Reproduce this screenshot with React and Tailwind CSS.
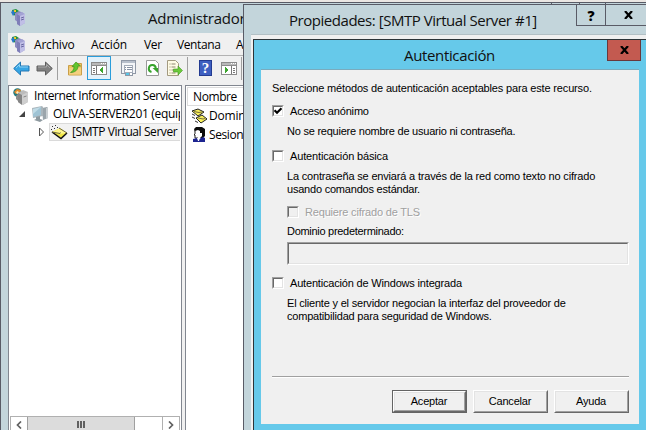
import React from "react";

const UI = "font-['Open_Sans','Noto_Sans',sans-serif]";
const DLG = "font-['Liberation_Sans',Arial,sans-serif]";

function ServerIcon() {
  return (
    <svg width="16" height="17" viewBox="0 0 16 17" className="shrink-0">
      <path d="M1 1l4-1 3 2-2 5-4-1z" fill="#22913c" />
      <path d="M0 3l3-2 1 3-2 3z" fill="#2878c8" />
      <path d="M3 1h2v2H3z" fill="#f0c62c" />
      <path d="M4 4l4-2 4 2v8l-4 2-4-3z" fill="#8d8cc0" />
      <path d="M6 5l5-2 3 2v9l-5 3-3-2z" fill="#a3a2d4" />
      <path d="M6 5l3 2v10l-3-2z" fill="#7f7eb8" />
      <path d="M9 7l5-2v9l-5 3z" fill="#c0bfe6" />
      <path d="M10 9l3-1M10 11l3-1" stroke="#6866a0" strokeWidth="1" />
    </svg>
  );
}

function IisIcon() {
  return (
    <svg width="16" height="17" viewBox="0 0 16 17" className="shrink-0">
      <circle cx="4.500" cy="4.500" r="4.200" fill="#217a80" />
      <path d="M1 4l3-3 4 1-1 3-4 1z" fill="#e28b2b" />
      <path d="M3 4l2-1 1 2-2 1z" fill="#fff0c0" />
      <path d="M3 8l2-2v7l-2-2z" fill="#8d8d8d" />
      <path d="M5 5l5-3 5 2v10l-5 3-5-3z" fill="#bcbcbc" />
      <path d="M5 5l4 2v10l-4-3z" fill="#858585" />
      <path d="M9 7l6-3v10l-6 3z" fill="#cfcfcf" />
      <path d="M10.500 9l3-1" stroke="#888" />
    </svg>
  );
}

function ComputerIcon() {
  return (
    <svg width="17" height="16" viewBox="0 0 17 16" className="shrink-0">
      <path d="M10 2l5-1 1 1v10l-5 2z" fill="#9ba5ab" />
      <path d="M14 2l2 0v10l-2 1z" fill="#c9cfd2" />
      <path d="M0 2l10-2 1 1v9l-10 2z" fill="#aab5bb" />
      <path d="M1 3l8-2v8l-8 2z" fill="#9fc3d4" />
      <path d="M1 3l8-2-8 7z" fill="#c0dbe6" />
      <path d="M4 11l4-1v3l3 1-3 2-6-2 2-1z" fill="#8d999f" />
    </svg>
  );
}

function EnvelopeIcon() {
  return (
    <svg width="17" height="15" viewBox="0 0 17 15" className="shrink-0">
      <path d="M1 1.500h1M4 .5h1M0 4.500h1M3 3.500h1M6 2.500h1" stroke="#333" />
      <path d="M1 7l8-4 7 5-6 5z" fill="#efe545" />
      <path d="M2 7l7-4 7 5-7 1z" fill="#fff78c" />
      <path d="M1 7l9 6.500 6-5.500" fill="none" stroke="#111" strokeWidth="1.500" />
      <path d="M1 7l8 1.500.5-1M8 3l8 5" fill="none" stroke="#6b6640" />
    </svg>
  );
}

function DomainsIcon() {
  return (
    <svg width="17" height="16" viewBox="0 0 17 16" className="shrink-0">
      <path d="M1 3l6-2 6 3-6 4z" fill="#f7ee5a" stroke="#222" />
      <path d="M3 3.500l5 1 3-.5" fill="none" stroke="#77703a" />
      <path d="M5 10l6-3 5 4-6 4z" fill="#f7ee5a" stroke="#222" />
      <path d="M7 10l5 1 2-.5" fill="none" stroke="#77703a" />
      <path d="M1 6l3 1.500M1 9l3 1.500M4 13l3 1.500" fill="none" stroke="#333" />
    </svg>
  );
}

function UserIcon() {
  return (
    <svg width="13" height="15" viewBox="0 0 13 15" className="shrink-0">
      <path d="M3 0h6l3 2v7l-2 2H6L2 5 1 2z" fill="#0c0c0c" />
      <path d="M2 4l3-1 2 1v2h2v3l-2 2H3V8L2 7z" fill="#fff" />
      <path d="M2 3v4l-1 1h1v3h3" fill="none" stroke="#222" />
      <path d="M0 12l4-1 2 1 4-2 2 1v4H0z" fill="#1d2490" />
      <path d="M4 11l3 0-1 3-1 0z" fill="#fff" />
    </svg>
  );
}

function ArrowIcon({ dark }) {
  return (
    <svg width="17" height="15" viewBox="0 0 17 15" className={dark ? "shrink-0 -scale-x-100" : "shrink-0"}>
      <path
        d="M.7 7.500L7.500 1v4H16v5H7.500v4z"
        fill={dark ? "#808080" : "#36a5e4"}
        stroke={dark ? "#5e5e5e" : "#2277b4"}
      />
      <path d="M3 7L6.500 3.500V6H15" fill="none" stroke={dark ? "#a9a9a9" : "#8bd2f5"} />
    </svg>
  );
}

function FolderUpIcon() {
  return (
    <svg width="15" height="15" viewBox="0 0 15 15" className="shrink-0">
      <path d="M.5 4.500h6l1-2h6v11.500H.5z" fill="#efc568" stroke="#c99f48" />
      <path d="M1 7h12v6.500H1z" fill="#f4d07f" />
      <path d="M2.500 11.500c2-1 3.500-3 3.500-6H4l4-4.500 4.500 4H10c0 4-3 6.500-7.500 6.500z" fill="#62c52e" stroke="#3d9020" strokeWidth=".7" />
    </svg>
  );
}

function PaneIcon({ flip }) {
  return (
    <svg width="16" height="13" viewBox="0 0 16 13" className="shrink-0" shapeRendering="crispEdges">
      <path d="M0 0h16v13H0z" fill="#8c8c8c" />
      <path d="M1 1h14v2H1z" fill="#b9b9b9" />
      <path d="M10 1h1v1h-1zM12 1h1v1h-1zM14 1h1v1h-1z" fill="#fff" />
      <path d="M1 4h14v8H1z" fill="#fff" />
      {flip ? (
        <>
          <path d="M10 4h1v8h-1zM12 6h2v1h-2zM12 8h2v1h-2zM12 10h2v1h-2z" fill="#777" />
          <path d="M4 5l4 3-4 3z" fill="#3ca52e" />
        </>
      ) : (
        <>
          <path d="M5 4h1v8H5zM2 6h2v1H2zM2 8h2v1H2zM2 10h2v1H2z" fill="#777" />
          <path d="M12 5L8 8l4 3z" fill="#3ca52e" />
        </>
      )}
    </svg>
  );
}

function PropsIcon() {
  return (
    <svg width="15" height="16" viewBox="0 0 15 16" className="shrink-0" shapeRendering="crispEdges">
      <path d="M0 0h15v14h-3v2H4v-2H0z" fill="#8f98a6" />
      <path d="M1 1h13v12H1z" fill="#f3f5f8" />
      <path d="M1 1h13v2H1z" fill="#b7bfcb" />
      <path d="M3 5h9v8H3z" fill="#a3abb8" />
      <path d="M4 6h7v6H4z" fill="#fff" />
      <path d="M4 7h1v1H4zM6 7h5v1H6zM4 9h1v1H4zM6 9h5v1H6z" fill="#8792a4" />
      <path d="M5 13h3v2H5z" fill="#57c5e6" />
      <path d="M9 13h2v2H9z" fill="#fff" />
    </svg>
  );
}

function RefreshIcon() {
  return (
    <svg width="13" height="16" viewBox="0 0 13 16" className="shrink-0">
      <path d="M.5.500h9l3 3v12H.5z" fill="#fff" stroke="#9a9a9a" />
      <path d="M5.500 12A3.500 3.500 0 1 1 9.800 8.500" fill="none" stroke="#38a32d" strokeWidth="2" />
      <path d="M6.500 8h5.500v5z" fill="#38a32d" />
    </svg>
  );
}

function ExportIcon() {
  return (
    <svg width="16" height="16" viewBox="0 0 16 16" className="shrink-0">
      <path d="M.5.500h8l3 3v12H.5z" fill="#fffbe4" stroke="#a39a80" />
      <path d="M2.500 4h1M4.500 4h4M2.500 7h1M4.500 7h4M2.500 10h1M4.500 10h3M2.500 13h1M4.500 13h4" stroke="#8d8770" />
      <path d="M6.500 9h4.500V6l4.500 4.500L11 15v-3H6.500z" fill="#6cc93b" stroke="#459a22" strokeWidth=".6" />
    </svg>
  );
}

function HelpIcon() {
  return (
    <div className="flex h-4 w-[13px] shrink-0 items-center justify-center border border-[#233b91] bg-[#3e5fc0] font-['Liberation_Serif',serif] text-[15px] leading-none font-bold text-white">
      ?
    </div>
  );
}

function CloseGlyph() {
  return (
    <svg width="9" height="8" viewBox="0 0 9 8">
      <path d="M1 0l7 8M8 0L1 8" stroke="#000" strokeWidth="2.200" />
    </svg>
  );
}

function Separator() {
  return <div className="h-[23px] w-px shrink-0 bg-[#a0a0a0]" />;
}

function MainWindow() {
  return (
    <div className="absolute top-[2px] left-0 h-[440px] w-[700px] border-t border-l border-[#595b66] bg-[#c3d5db]">
      <div className="flex h-[30px] items-center">
        <div className="-mt-px ml-[10px]"><ServerIcon /></div>
        <span className="ml-[121px] text-[15px] tracking-[-0.25px] whitespace-nowrap text-[#111]">Administrador</span>
        <div className="ml-auto flex h-full w-[149px] shrink-0">
          <div className="h-full w-7 border-l border-[#595b66]" />
          <div className="h-full w-[26px] border-l border-[#595b66]" />
          <div className="h-full flex-1 border-l border-[#595b66]" />
        </div>
      </div>
      <div className="ml-[7px] h-[410px] bg-[#f0f0f0]">
        <div className="flex h-[23px] items-center border-b border-[#b2b2b2] pt-px pl-[3px] text-[12px] text-black">
          <ServerIcon />
          <span className="ml-[7px] w-[57px] tracking-[-0.2px]">Archivo</span>
          <span className="w-[53px] tracking-[-0.1px]">Acción</span>
          <span className="w-[33px] tracking-[-0.3px]">Ver</span>
          <span className="w-[59px] tracking-[-0.4px]">Ventana</span>
          <span>Ayuda</span>
        </div>
        <div className="flex h-6 items-center pl-[5px]">
          <ArrowIcon />
          <div className="ml-[6px]"><ArrowIcon dark /></div>
          <div className="ml-1"><Separator /></div>
          <div className="ml-[10px]"><FolderUpIcon /></div>
          <div className="ml-1 flex h-6 w-6 items-center justify-center border border-[#2a9ddb] bg-[#e3f1fa]"><PaneIcon /></div>
          <div className="ml-[10px]"><PropsIcon /></div>
          <div className="ml-[10px]"><RefreshIcon /></div>
          <div className="ml-2"><ExportIcon /></div>
          <div className="ml-1"><Separator /></div>
          <div className="ml-[11px]"><HelpIcon /></div>
          <div className="ml-[9px]"><PaneIcon flip /></div>
          <div className="ml-1"><Separator /></div>
        </div>
        <div className="mt-[5px] flex h-[360px]">
          <div className="flex w-[174px] flex-col border border-[#828790] bg-white px-px pt-px text-[12px] text-black">
            <div className="flex h-[18px] items-center overflow-hidden pl-[3px] whitespace-nowrap">
              <IisIcon />
              <span className="ml-[5px] tracking-[-0.43px]">Internet Information Service</span>
            </div>
            <div className="flex h-[18px] items-center overflow-hidden pl-[9px] whitespace-nowrap">
              <svg width="7" height="7" className="shrink-0"><path d="M6 0v6H0z" fill="#444" /></svg>
              <div className="ml-[6px]"><ComputerIcon /></div>
              <span className="ml-1 tracking-[-0.3px]">OLIVA-SERVER201 (equipo local)</span>
            </div>
            <div className="flex h-[18px] items-center whitespace-nowrap">
              <svg width="6" height="10" className="ml-[29px] shrink-0"><path d="M.5 1v8l4-4z" fill="#fff" stroke="#555" /></svg>
              <div className="ml-1 flex h-[18px] min-w-0 flex-1 items-center overflow-hidden border border-r-0 border-[#dadada] bg-[#f2f2f2] pl-px">
                <EnvelopeIcon />
                <span className="ml-1 tracking-[-0.42px]">[SMTP Virtual Server</span>
              </div>
            </div>
            <div className="mt-[275px] flex h-[17px] border border-[#b0b0b0] bg-white">
              <div className="flex w-4 items-center justify-center">
                <svg width="6" height="8"><path d="M5 .5L1.500 4 5 7.500" fill="none" stroke="#606060" strokeWidth="1.700" /></svg>
              </div>
              <div className="flex w-[108px] items-center justify-center gap-px border-x border-[#a0a0a0] bg-[#dcdcdc]">
                <div className="h-[7px] w-[2px] bg-[#606060]" />
                <div className="h-[7px] w-[2px] bg-[#606060]" />
                <div className="h-[7px] w-[2px] bg-[#606060]" />
              </div>
              <div className="flex-1" />
              <div className="flex w-[17px] items-center justify-center border-l border-[#b0b0b0]">
                <svg width="6" height="8"><path d="M1 .5L4.500 4 1 7.500" fill="none" stroke="#606060" strokeWidth="1.700" /></svg>
              </div>
            </div>
          </div>
          <div className="ml-[3px] flex-1 border border-[#828790] bg-white pt-px pl-px text-[12px] text-black">
            <div className="flex h-[19px] items-center border border-[#dcdcdc] pl-[5px] tracking-[-0.4px]">Nombre</div>
            <div className="flex h-[19px] items-center pl-1">
              <DomainsIcon />
              <span className="ml-[1px] tracking-[-0.2px]">Dominios</span>
            </div>
            <div className="flex h-[19px] items-center pl-[6px]">
              <UserIcon />
              <span className="ml-[3px] tracking-[-0.4px]">Sesiones</span>
            </div>
          </div>
        </div>
      </div>
    </div>
  );
}

function CheckBox({ checked, disabled }) {
  return (
    <div className="mb-px h-3 w-3 shrink-0 border border-t-[#a0a0a0] border-r-white border-b-white border-l-[#a0a0a0]">
      <div
        className={
          "flex h-full w-full items-center justify-center border border-t-[#696969] border-r-[#e3e3e3] border-b-[#e3e3e3] border-l-[#696969] " +
          (disabled ? "bg-[#f0f0f0]" : "bg-white")
        }
      >
        {checked && (
          <svg width="8" height="8" viewBox="0 0 8 8" className="shrink-0">
            <path d="M.5 3.200L3 5.700 7.500 1.200" fill="none" stroke="#000" strokeWidth="2.200" />
          </svg>
        )}
      </div>
    </div>
  );
}

function Button({ label, primary }) {
  return (
    <div className={primary ? "h-[23px] w-[75px] border border-[#646464] bg-[#f0f0f0]" : "h-[23px] w-[75px] bg-[#f0f0f0]"}>
      <div className="h-full w-full border border-t-white border-r-[#696969] border-b-[#696969] border-l-white">
        <div className="flex h-full w-full items-center justify-center border border-t-[#e3e3e3] border-r-[#a0a0a0] border-b-[#a0a0a0] border-l-[#e3e3e3] pr-px tracking-[-0.2px]">
          {label}
        </div>
      </div>
    </div>
  );
}

function AuthDialog() {
  return (
    <div className="absolute top-[39px] left-[253px] h-[400px] w-[395px] border border-[#2b3438] bg-[#66c9ea]">
      <div className="flex h-[29px] items-start">
        <div className="w-[353px] pt-[4px] pl-[150px] text-[15px] leading-[22px] tracking-[-0.35px] text-[#111]">Autenticación</div>
        <div className="flex h-[21px] w-[34px] items-center justify-center border border-t-0 border-[#69383c] bg-[#c35a50]">
          <CloseGlyph />
        </div>
      </div>
      <div className={`ml-[7px] h-[355px] w-[378px] border-t border-[#7aabbd] bg-[#f0f0f0] pl-[11px] text-[11px] leading-[13px] tracking-[-0.18px] whitespace-nowrap text-black ${DLG}`}>
        <div className="pt-3 tracking-[-0.16px]">Seleccione métodos de autenticación aceptables para este recurso.</div>
        <div className="mt-[10px] flex items-center">
          <CheckBox checked />
          <span className="ml-[6px]">Acceso anónimo</span>
        </div>
        <div className="mt-[7px] pl-[15px] tracking-[-0.23px]">No se requiere nombre de usuario ni contraseña.</div>
        <div className="mt-3 flex items-center">
          <CheckBox />
          <span className="ml-[6px] tracking-[-0.15px]">Autenticación básica</span>
        </div>
        <div className="mt-[7px] pl-[15px]">
          <div>La contraseña se enviará a través de la red como texto no cifrado</div>
          <div className="tracking-[-0.21px]">usando comandos estándar.</div>
        </div>
        <div className="mt-[10px] flex items-center pl-[15px]">
          <CheckBox disabled />
          <span className="ml-[6px] text-[#a0a0a0] [text-shadow:1px_1px_0_#fff]">Requiere cifrado de TLS</span>
        </div>
        <div className="mt-[6px] pl-[15px] tracking-[-0.29px]">Dominio predeterminado:</div>
        <div className="mt-1 ml-[15px] h-[23px] w-[342px] border border-t-[#a0a0a0] border-r-white border-b-white border-l-[#a0a0a0]">
          <div className="h-full w-full border border-t-[#696969] border-r-[#e3e3e3] border-b-[#e3e3e3] border-l-[#696969]" />
        </div>
        <div className="mt-3 flex items-center">
          <CheckBox />
          <span className="ml-[6px]">Autenticación de Windows integrada</span>
        </div>
        <div className="mt-[7px] pl-[15px] tracking-[-0.2px]">
          <div>El cliente y el servidor negocian la interfaz del proveedor de</div>
          <div>compatibilidad para seguridad de Windows.</div>
        </div>
        <div className="mt-[53px] h-[2px] w-[357px] border-t border-b border-t-[#a0a0a0] border-b-white" />
        <div className="mt-3 flex w-[357px] justify-end gap-[6px]">
          <Button label="Aceptar" primary />
          <Button label="Cancelar" />
          <Button label="Ayuda" />
        </div>
      </div>
    </div>
  );
}

function PropertiesDialog() {
  return (
    <div className="absolute top-1 left-[243px] h-[440px] w-[420px] border-t border-l border-[#595b66] bg-[#c3d5db]">
      <div className="flex h-[29px] items-start">
        <div className="w-[332px] pt-[4px] pl-[45px] text-[15px] leading-[22px] tracking-[-0.46px] whitespace-nowrap text-[#111]">
          Propiedades: [SMTP Virtual Server #1]
        </div>
        <div className="flex h-[21px] w-[29px] items-center justify-center border-b border-l border-[#595b66] text-[14px] font-extrabold text-black">?</div>
        <div className="flex h-[21px] w-[46px] items-center justify-center border-b border-l border-[#595b66]">
          <CloseGlyph />
        </div>
      </div>
      <div className="ml-[7px] h-[405px] border-t border-[#b2c0c5] bg-[#f0f0f0]" />
    </div>
  );
}

export default function App() {
  return (
    <div className={`relative h-[430px] w-[646px] overflow-hidden bg-[#ebe7e3] ${UI}`}>
      <MainWindow />
      <PropertiesDialog />
      <AuthDialog />
    </div>
  );
}
